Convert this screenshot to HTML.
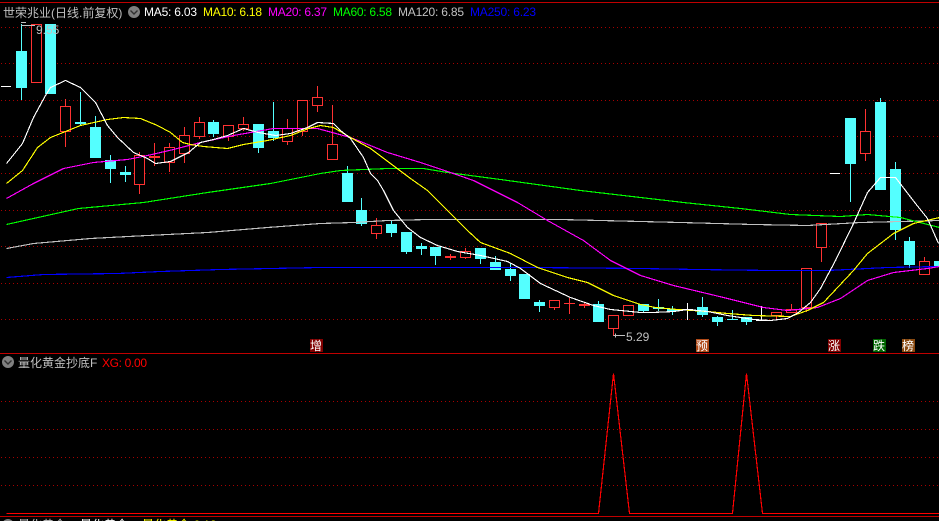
<!DOCTYPE html>
<html lang="zh">
<head>
<meta charset="utf-8">
<title>世荣兆业</title>
<style>
html,body{margin:0;padding:0;background:#000;width:939px;height:521px;overflow:hidden}
svg{display:block}
.l{fill:none;stroke-width:1.15}
.t{font-family:"Liberation Sans",Arial,sans-serif;font-size:12px}
.c{font-family:"Liberation Sans","WenQuanYi Zen Hei","Noto Sans CJK SC",sans-serif;font-size:12px}
</style>
</head>
<body>
<svg width="939" height="521" viewBox="0 0 939 521" xmlns="http://www.w3.org/2000/svg">
<defs>
<pattern id="d" x="0" y="0" width="4" height="1" patternUnits="userSpaceOnUse"><rect x="1" y="0" width="1" height="1" fill="#a80000"/></pattern>
</defs>
<rect width="939" height="521" fill="#000"/>
<g shape-rendering="crispEdges">
<g fill="url(#d)">
<rect x="0" y="27" width="939" height="1"/><rect x="0" y="63" width="939" height="1"/><rect x="0" y="100" width="939" height="1"/><rect x="0" y="136" width="939" height="1"/><rect x="0" y="173" width="939" height="1"/><rect x="0" y="210" width="939" height="1"/><rect x="0" y="246" width="939" height="1"/><rect x="0" y="283" width="939" height="1"/><rect x="0" y="319" width="939" height="1"/>
<rect x="0" y="401" width="939" height="1"/><rect x="0" y="429" width="939" height="1"/><rect x="0" y="457" width="939" height="1"/><rect x="0" y="485" width="939" height="1"/>
</g>
<path d="M0 2.500H939M0 353.500H939M0 516.500H939" stroke="#c00000" fill="none"/>
<!-- wicks -->
<path stroke="#54ffff" fill="none" d="M21.5 24V100M80.5 92V125M95.5 116V127M110.5 155V183M125.5 166V182M213.5 120V137M258.5 148V153M273.5 102V141M347.5 166V173M361.5 198V226M391.5 221V237M406.5 232V254M421.5 243V255M435.5 256V265M480.5 259V264M495.5 256V262M510.5 263V281M539.5 300V312M598.5 301V304M643.5 311V312M658.5 299V311M672.5 306V315M702.5 297V317M717.5 316V326M732.5 310V319M746.5 322V325M850.5 164V202M880.5 98V102M895.5 162V240M909.5 237V268"/>
<path stroke="#ff3232" fill="none" d="M65.5 99V147M139.5 152V194M169.5 143V172M184.5 127V163M199.5 117V139M228.5 136V141M243.5 117V131M287.5 119V145M302.5 131V136M317.5 86V112M332.5 105V144M376.5 218V239M465.5 248V259M554.5 307V310M613.5 328V336M776.5 315V319M791.5 304V309M806.5 307V312M821.5 247V262M865.5 109V161M924.5 257V261M154.5 143V166M450.5 254V260M569.5 298V314M584.5 302V308"/>
<path stroke="#fff" fill="none" d="M687.5 303V320M761.5 306V321"/>
<!-- cyan bodies -->
<g fill="#54ffff">
<rect x="16" y="51" width="11" height="37"/><rect x="45" y="24" width="11" height="70"/><rect x="75" y="122" width="11" height="2"/><rect x="90" y="127" width="11" height="31"/><rect x="105" y="160" width="11" height="9"/><rect x="120" y="172" width="11" height="3"/><rect x="208" y="122" width="11" height="12"/><rect x="253" y="124" width="11" height="24"/><rect x="268" y="131" width="11" height="7"/><rect x="342" y="173" width="11" height="29"/><rect x="356" y="210" width="11" height="14"/><rect x="386" y="224" width="11" height="9"/><rect x="401" y="232" width="11" height="20"/><rect x="416" y="246" width="11" height="3"/><rect x="430" y="247" width="11" height="9"/><rect x="475" y="248" width="11" height="11"/><rect x="490" y="262" width="11" height="8"/><rect x="505" y="269" width="11" height="7"/><rect x="519" y="274" width="11" height="25"/><rect x="534" y="302" width="11" height="4"/><rect x="593" y="304" width="11" height="18"/><rect x="638" y="304" width="11" height="7"/><rect x="653" y="307" width="11" height="2"/><rect x="667" y="309" width="11" height="2"/><rect x="697" y="307" width="11" height="8"/><rect x="712" y="317" width="11" height="5"/><rect x="727" y="319" width="11" height="1"/><rect x="741" y="317" width="11" height="5"/><rect x="845" y="118" width="11" height="46"/><rect x="875" y="102" width="11" height="88"/><rect x="890" y="169" width="11" height="61"/><rect x="904" y="241" width="11" height="24"/><rect x="934" y="261" width="5" height="5"/>
</g>
<!-- red hollow bodies -->
<g fill="#000" stroke="#ff3232">
<rect x="31.5" y="24.500" width="10" height="58"/><rect x="60.5" y="106.500" width="10" height="25"/><rect x="134.5" y="155.500" width="10" height="29"/><rect x="164.5" y="147.500" width="10" height="15"/><rect x="179.5" y="135.500" width="10" height="18"/><rect x="194.5" y="122.500" width="10" height="14"/><rect x="223.5" y="125.500" width="10" height="11"/><rect x="238.5" y="124.500" width="10" height="4"/><rect x="282.5" y="128.500" width="10" height="13"/><rect x="297.5" y="100.500" width="10" height="31"/><rect x="312.5" y="97.500" width="10" height="8"/><rect x="327.5" y="144.500" width="10" height="15"/><rect x="371.5" y="225.500" width="10" height="8"/><rect x="460.5" y="251.500" width="10" height="6"/><rect x="549.5" y="300.500" width="10" height="7"/><rect x="608.5" y="315.500" width="10" height="13"/><rect x="623.5" y="305.500" width="10" height="10"/><rect x="771.5" y="312.500" width="10" height="3"/><rect x="786.5" y="309.500" width="10" height="3"/><rect x="801.5" y="268.500" width="10" height="39"/><rect x="816.5" y="223.500" width="10" height="24"/><rect x="860.5" y="131.500" width="10" height="22"/><rect x="919.5" y="261.500" width="10" height="13"/>
</g>
<g fill="#ff3232"><rect x="149" y="156" width="11" height="2"/><rect x="445" y="256" width="11" height="2"/><rect x="564" y="303" width="11" height="1"/><rect x="579" y="304" width="11" height="2"/></g>
<g fill="#fff"><rect x="1" y="86" width="10" height="1"/><rect x="682" y="309" width="11" height="1"/><rect x="756" y="320" width="13" height="1"/><rect x="830" y="173" width="10" height="1"/></g>
<!-- MA lines -->
<g transform="translate(0.5,0.5)">
<polyline class="l" stroke="#0000ff" points="6,277 43,274 117,273 160,271 220,269 320,267 533,267 640,268 697,269 770,270 827,270 887,267 939,266"/>
<polyline class="l" stroke="#c0c0c0" points="6,248 33,243 90,238 147,235 207,232 267,227 320,223 353,222 387,220 427,219 560,219 640,221 680,222 753,224 807,225 860,222 939,220"/>
<polyline class="l" stroke="#00ff00" points="6,224 33,218 78,208 143,202 207,192 270,183 320,173 340,170 387,168 423,168 447,172 500,179 580,190 640,197 683,202 740,208 790,214 840,216 867,214 900,217 939,227"/>
<polyline class="l" stroke="#ff00ff" points="6,198 33,183 63,168 93,162 127,159 147,155 173,149 200,142 233,135 273,128 317,128 350,137 387,152 420,162 447,171 473,180 493,190 517,202 547,220 583,240 610,260 640,275 673,285 723,297 763,307 787,310 817,307 840,298 867,280 893,272 927,268 939,266"/>
<polyline class="l" stroke="#ffff00" points="6,183 22,170 37,147 50,137 80,125 107,119 123,117 140,118 157,125 170,132 182,142 190,144 203,146 227,148 243,144 267,140 290,135 308,128 320,125 333,127 350,137 370,148 390,163 410,178 427,190 442,205 467,230 480,242 510,253 537,267 567,277 587,282 613,295 640,304 655,307 677,309 707,311 727,313 753,315 790,316 807,310 823,302 853,270 867,253 880,243 893,233 913,223 939,217"/>
<polyline class="l" stroke="#ffffff" points="6,163 22,143 33,117 45,95 50,87 65,80 80,87 95,102 107,125 117,137 133,152 147,158 155,163 170,161 188,152 200,142 213,139 227,135 243,128 258,132 275,135 290,133 307,127 317,122 333,123 340,130 350,138 363,157 370,173 377,180 383,190 393,210 407,227 420,237 437,245 457,251 480,255 507,261 520,268 540,283 570,297 593,305 610,309 640,312 652,312 673,311 687,309 707,311 727,315 753,319 770,320 787,318 798,312 810,302 820,288 835,260 853,223 867,192 880,177 895,177 915,203 927,218 938,243"/>
<!-- indicator -->
<polyline class="l" stroke="#ff0000" points="6,513 598,513 613,373 629,513 732,513 746,373 762,513 939,513"/>
</g>
<!-- arrows -->
<path stroke="#c0c0c0" fill="none" d="M21 22.500H26M21 25.500H35M613.5 335.500H625M615.5 333.500V337.500"/>
<!-- marker backgrounds -->
<rect x="310" y="339" width="13" height="13" fill="#800000"/>
<rect x="696" y="339" width="13" height="13" fill="#b04a18"/>
<rect x="828" y="339" width="13" height="13" fill="#800000"/>
<rect x="873" y="339" width="13" height="13" fill="#006400"/>
<rect x="902" y="339" width="13" height="13" fill="#8a4a10"/>
</g>
<text class="t" x="36" y="34" fill="#c0c0c0">9.55</text>
<text class="t" x="626" y="341" fill="#c0c0c0">5.29</text>
<text class="c" x="310" y="350" fill="#fff">增</text>
<text class="c" x="696" y="350" fill="#fff">预</text>
<text class="c" x="828" y="350" fill="#fff">涨</text>
<text class="c" x="873" y="350" fill="#fff">跌</text>
<text class="c" x="902" y="350" fill="#fff">榜</text>
<text class="c" x="3" y="17" fill="#c0c0c0">世荣兆业(日线.前复权)</text>
<circle cx="134" cy="12" r="6" fill="#808080"/><path d="M130.5 10.5L134 14L137.5 10.5" stroke="#303030" stroke-width="1.4" fill="none"/>
<g class="t">
<text x="144" y="16" fill="#fff" textLength="53">MA5: 6.03</text>
<text x="203" y="16" fill="#ff0" textLength="59">MA10: 6.18</text>
<text x="268" y="16" fill="#f0f" textLength="59">MA20: 6.37</text>
<text x="333" y="16" fill="#0f0" textLength="59">MA60: 6.58</text>
<text x="398" y="16" fill="#c0c0c0" textLength="66">MA120: 6.85</text>
<text x="470" y="16" fill="#0000ff" textLength="66">MA250: 6.23</text>
</g>
<circle cx="8" cy="362" r="6" fill="#808080"/><path d="M4.500 360.500L8 364L11.500 360.500" stroke="#303030" stroke-width="1.4" fill="none"/>
<text class="c" x="18" y="367" fill="#c0c0c0">量化黄金抄底F</text>
<text class="t" x="102" y="367" fill="#ff0000" textLength="45">XG: 0.00</text>
<circle cx="8" cy="525" r="6" fill="#808080"/>
<text class="c" x="18" y="529" fill="#c0c0c0">量化黄金</text>
<text class="c" x="80" y="529" fill="#fff">量化黄金</text>
<text class="c" x="142" y="529" fill="#ff0">量化黄金 6.18</text>
</svg>
</body>
</html>
